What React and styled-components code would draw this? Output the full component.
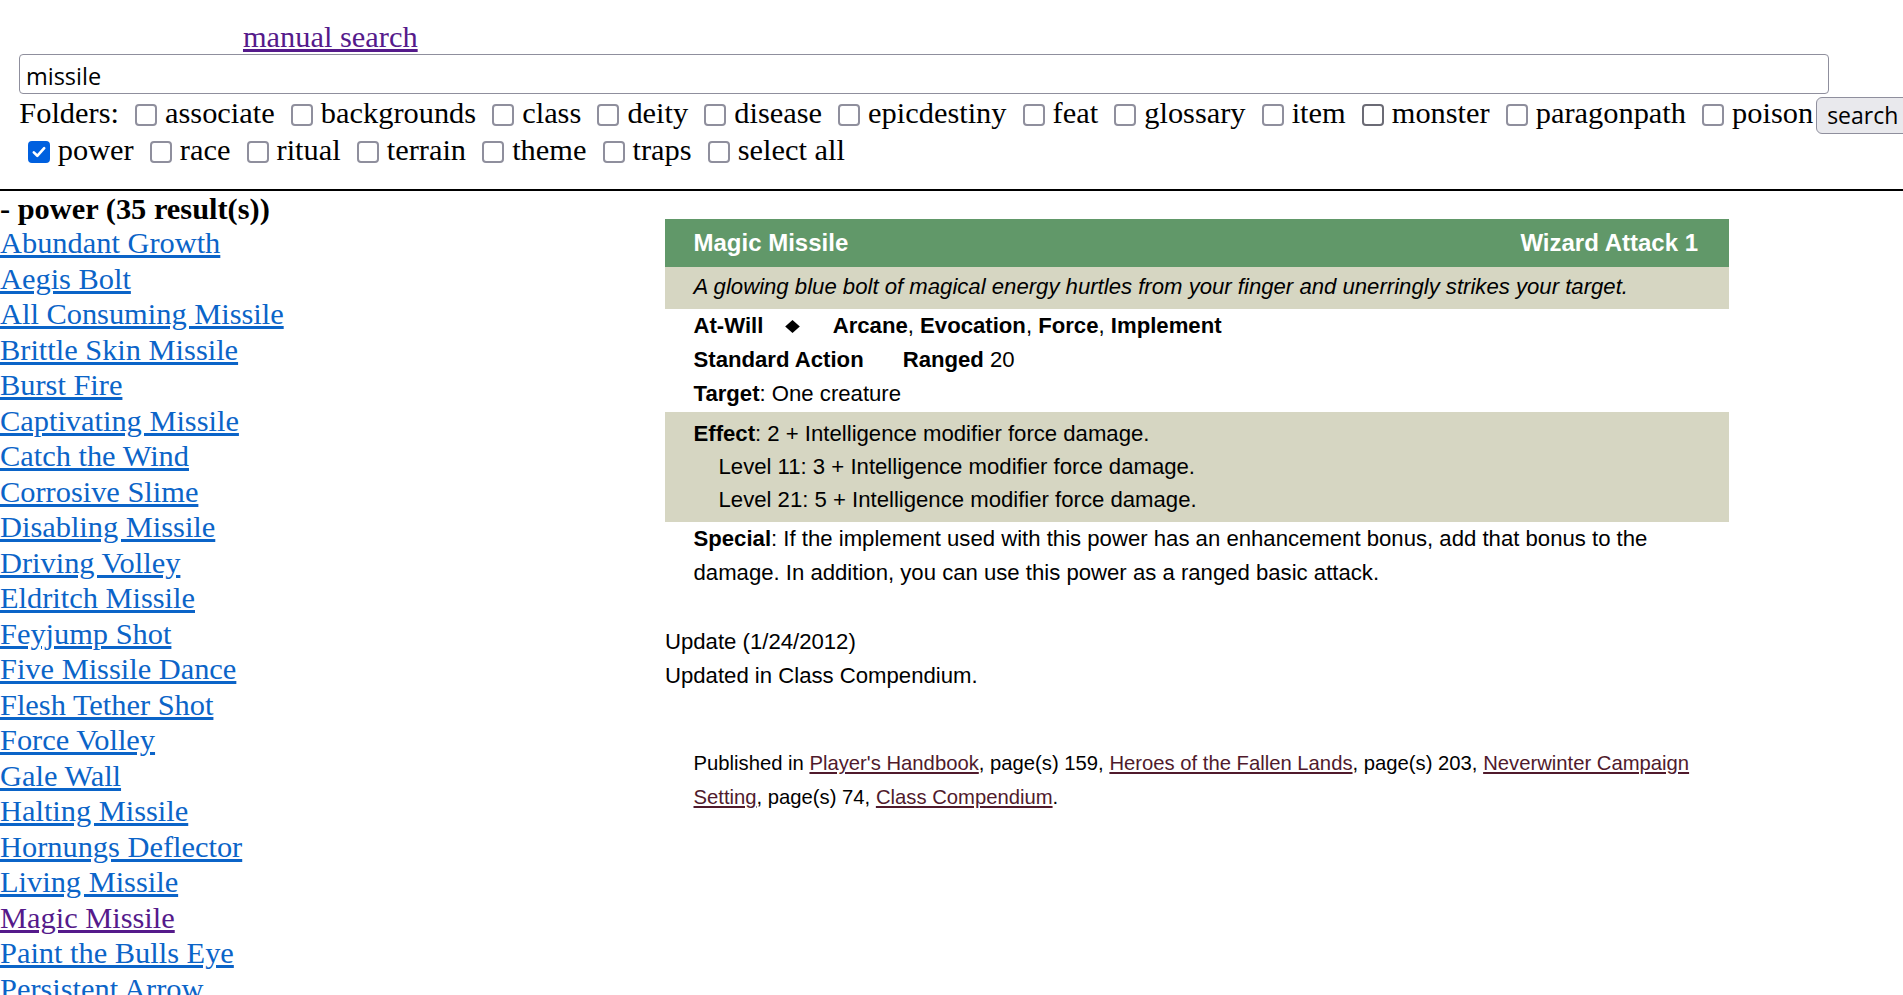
import React from "react";
import styled, { createGlobalStyle } from "styled-components";

const SERIF = `"Liberation Serif", "Times New Roman", serif`;
const SANS = `"Liberation Sans", Arial, sans-serif`;
const UI = `"Open Sans", "Noto Sans", sans-serif`;

const GlobalStyle = createGlobalStyle`
  html, body { margin: 0; padding: 0; overflow: hidden; background: #fff; }
  body { font-family: ${SERIF}; color: #000; }
`;

const Page = styled.div`
  width: 1903px;
`;

const SearchForm = styled.form`
  padding: 20px 0 20.4px 19.3px;
  border-bottom: 2px solid #000;
  font-family: ${SERIF};
  font-size: 30.4px;
`;

const ManualRow = styled.div`
  height: 34px;
  line-height: 34px;
  padding-left: 223.7px;
`;

const VisitedLink = styled.a`
  color: #551a8b;
`;

const SearchInput = styled.input`
  display: block;
  box-sizing: border-box;
  width: 1810px;
  height: 40px;
  margin: 0;
  padding: 4px 6px 0 5.7px;
  border: 1px solid #8f8f9d;
  border-radius: 4px;
  font-family: ${UI};
  font-size: 23.5px;
  color: #000;
  background: #fff;
  outline: none;
`;

const FolderRows = styled.div`
  padding-top: 1px;
`;

const FolderRow = styled.div`
  height: 36.6px;
  line-height: 36.6px;
  white-space: nowrap;
`;

const Box = styled.span`
  display: inline-block;
  box-sizing: border-box;
  width: 22px;
  height: 22px;
  margin: 0 7.9px 0 8.6px;
  vertical-align: -3px;
  border: 2px solid
    ${(p) => (p.$checked ? "#0060df" : p.$hover ? "#6b6b75" : "#8f8f9d")};
  background: ${(p) => (p.$checked ? "#0060df" : "#fff")};
  border-radius: 4px;

  svg {
    display: block;
  }
`;

const SearchButton = styled.button`
  box-sizing: border-box;
  height: 37.6px;
  margin: 1.7px 0 0 3px;
  padding: 0 10px;
  vertical-align: top;
  font-family: ${UI};
  font-size: 23px;
  line-height: normal;
  color: #000;
  background: #e9e9ed;
  border: 1px solid #8f8f9d;
  border-radius: 6px;
`;

const Main = styled.div`
  display: flex;
  align-items: flex-start;
`;

const ResultsColumn = styled.div`
  width: 665px;
  flex: none;
  font-family: ${SERIF};
  font-size: 30.4px;
  line-height: 35.5px;
`;

const ResultsHeading = styled.div`
  font-weight: bold;
  padding-top: 1.4px;
  line-height: 34.1px;
`;

const ResultLink = styled.a`
  display: block;
  width: max-content;
  color: ${(p) => (p.$visited ? "#551a8b" : "#0b64c8")};
`;

const DetailColumn = styled.div`
  width: 1064px;
  flex: none;
  padding-top: 28.6px;
  font-family: ${SANS};
  font-size: 22.15px;
  color: #000;
`;

const PowerTitle = styled.h1`
  margin: 0;
  display: flex;
  justify-content: space-between;
  height: 48px;
  line-height: 48px;
  padding: 0 31px 0 28.5px;
  background: #619869;
  color: #fff;
  font-size: 24px;
  font-weight: bold;
`;

const Flavor = styled.p`
  margin: 0;
  padding: 2.5px 28.5px 5.2px;
  line-height: 34px;
  background: #d6d6c2;
  font-style: italic;
`;

const StatLine = styled.p`
  margin: 0;
  padding: 0 28.5px;
  line-height: ${(p) => p.$lh || "34px"};
`;

const Diamond = styled.svg`
  margin: 0 32.7px 0 21.6px;
  vertical-align: baseline;
`;

const Gap = styled.span`
  display: inline-block;
  width: 39px;
`;

const EffectBlock = styled.div`
  background: #d6d6c2;
  padding: 5.3px 28.5px 5.7px;
  line-height: 33px;
`;

const EffectLine = styled.div`
  padding-left: ${(p) => (p.$indent ? "25px" : "0")};
`;

const SpecialText = styled.p`
  margin: 0;
  padding: 0 28.5px;
  line-height: 34.5px;
`;

const UpdateNote = styled.div`
  margin-top: 34.8px;
  line-height: 33.4px;
`;

const Published = styled.p`
  margin: 54px 0 0;
  padding: 0 28.5px;
  font-size: 20.25px;
  line-height: 34px;
`;

const SourceLink = styled.a`
  color: #501a2c;
`;

const Check = ({ checked, hover }) => (
  <Box $checked={checked} $hover={hover}>
    {checked && (
      <svg width="18" height="18" viewBox="0 0 18 18">
        <path
          d="M3.8 9.4 L7.3 12.8 L14.2 5.2"
          fill="none"
          stroke="#fff"
          strokeWidth="2.6"
          strokeLinecap="round"
          strokeLinejoin="round"
        />
      </svg>
    )}
  </Box>
);

const row1 = [
  "associate",
  "backgrounds",
  "class",
  "deity",
  "disease",
  "epicdestiny",
  "feat",
  "glossary",
  "item",
  "monster",
  "paragonpath",
  "poison",
];
const row2 = ["power", "race", "ritual", "terrain", "theme", "traps", "select all"];

const results = [
  "Abundant Growth",
  "Aegis Bolt",
  "All Consuming Missile",
  "Brittle Skin Missile",
  "Burst Fire",
  "Captivating Missile",
  "Catch the Wind",
  "Corrosive Slime",
  "Disabling Missile",
  "Driving Volley",
  "Eldritch Missile",
  "Feyjump Shot",
  "Five Missile Dance",
  "Flesh Tether Shot",
  "Force Volley",
  "Gale Wall",
  "Halting Missile",
  "Hornungs Deflector",
  "Living Missile",
  "Magic Missile",
  "Paint the Bulls Eye",
  "Persistent Arrow",
  "Piercing Missile",
  "Prismatic Missile",
  "Rain of Arrows",
  "Ricochet Shot",
  "Scattering Missile",
  "Searing Missile",
  "Seeking Missile",
  "Shattering Missile",
  "Storm Missile",
  "Sundering Missile",
  "Thundering Missile",
  "Unerring Missile",
  "Volley of Missiles",
];

export default function App() {
  return (
    <Page>
      <GlobalStyle />
      <SearchForm onSubmit={(e) => e.preventDefault()}>
        <ManualRow>
          <VisitedLink href="#manual">manual search</VisitedLink>
        </ManualRow>
        <SearchInput type="text" defaultValue="missile" />
        <FolderRows>
          <FolderRow>
            Folders:{" "}
            {row1.map((name, i) => (
              <React.Fragment key={name}>
                <Check hover={name === "monster"} />
                {name}
                {i < row1.length - 1 ? " " : ""}
              </React.Fragment>
            ))}
            <SearchButton type="submit">search</SearchButton>
          </FolderRow>
          <FolderRow>
            {row2.map((name, i) => (
              <React.Fragment key={name}>
                <Check checked={name === "power"} />
                {name}
                {i < row2.length - 1 ? " " : ""}
              </React.Fragment>
            ))}
          </FolderRow>
        </FolderRows>
      </SearchForm>
      <Main>
        <ResultsColumn>
          <ResultsHeading>- power (35 result(s))</ResultsHeading>
          {results.map((r) => (
            <ResultLink key={r} href="#" $visited={r === "Magic Missile"}>
              {r}
            </ResultLink>
          ))}
        </ResultsColumn>
        <DetailColumn>
          <div>
            <PowerTitle>
              <span>Magic Missile</span>
              <span>Wizard Attack 1</span>
            </PowerTitle>
            <Flavor>
              A glowing blue bolt of magical energy hurtles from your finger and
              unerringly strikes your target.
            </Flavor>
            <StatLine>
              <b>At-Will</b>
              <Diamond width="15" height="13" viewBox="0 0 15 13">
                <polygon points="7.5,0 14.8,6.5 7.5,13 0.2,6.5" fill="#000" />
              </Diamond>
              <b>Arcane</b>, <b>Evocation</b>, <b>Force</b>, <b>Implement</b>
            </StatLine>
            <StatLine>
              <b>Standard Action</b>
              <Gap />
              <b>Ranged</b> 20
            </StatLine>
            <StatLine $lh="34.8px">
              <b>Target</b>: One creature
            </StatLine>
            <EffectBlock>
              <EffectLine>
                <b>Effect</b>: 2 + Intelligence modifier force damage.
              </EffectLine>
              <EffectLine $indent>Level 11: 3 + Intelligence modifier force damage.</EffectLine>
              <EffectLine $indent>Level 21: 5 + Intelligence modifier force damage.</EffectLine>
            </EffectBlock>
            <SpecialText>
              <b>Special</b>: If the implement used with this power has an
              enhancement bonus, add that bonus to the damage. In addition, you
              can use this power as a ranged basic attack.
            </SpecialText>
          </div>
          <UpdateNote>
            <div>Update (1/24/2012)</div>
            <div>Updated in Class Compendium.</div>
          </UpdateNote>
          <Published>
            Published in <SourceLink href="#">Player's Handbook</SourceLink>,
            page(s) 159, <SourceLink href="#">Heroes of the Fallen Lands</SourceLink>,
            page(s) 203,{" "}
            <SourceLink href="#">Neverwinter Campaign Setting</SourceLink>, page(s)
            74, <SourceLink href="#">Class Compendium</SourceLink>.
          </Published>
        </DetailColumn>
      </Main>
    </Page>
  );
}
